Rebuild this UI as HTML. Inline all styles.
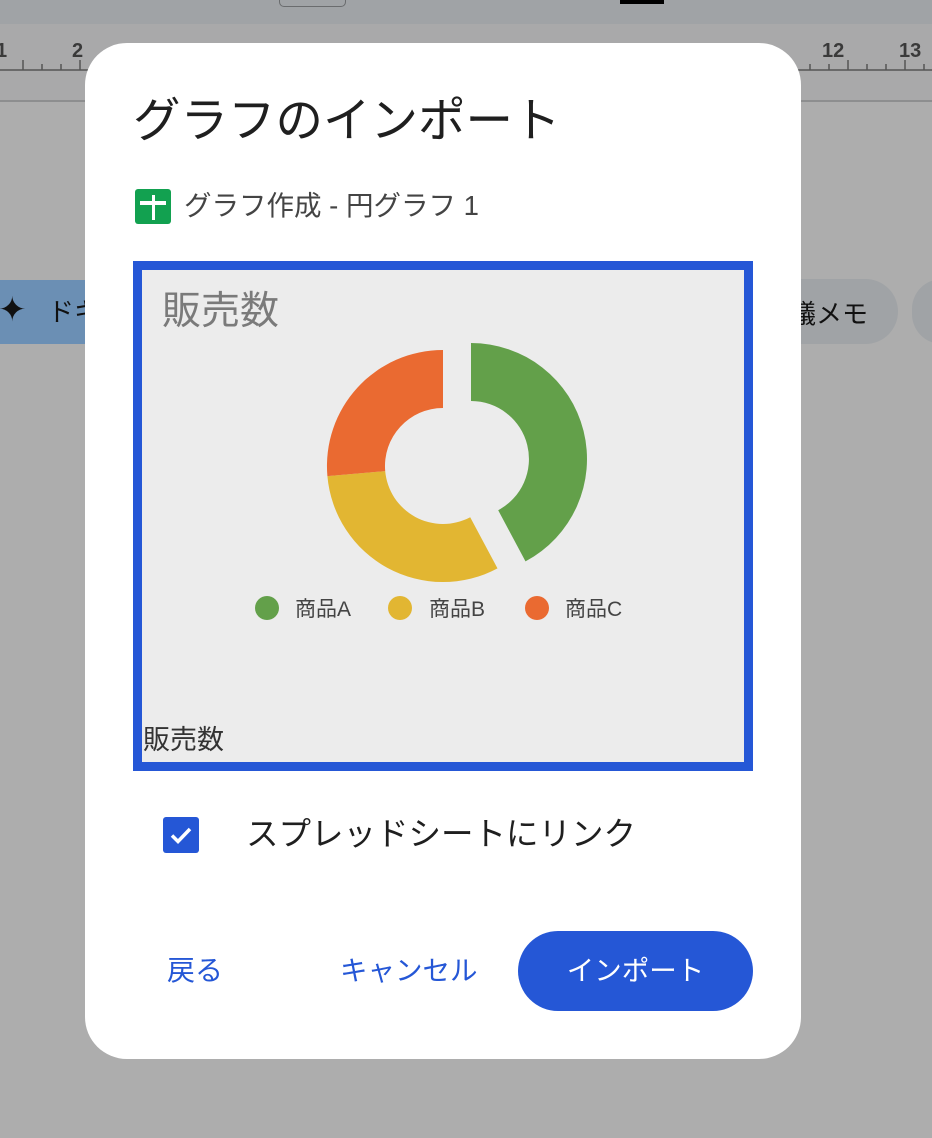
<!DOCTYPE html>
<html><head><meta charset="utf-8"><style>
*{margin:0;padding:0;box-sizing:border-box}
body{width:932px;height:1138px;overflow:hidden;background:#adadad;font-family:"Liberation Sans","Noto Sans CJK JP",sans-serif;position:relative}
.a{position:absolute;white-space:nowrap}
</style></head><body>
<div class="a" style="left:0;top:0;width:932px;height:24px;background:#a0a3a6"></div>
<div class="a" style="left:279px;top:-8px;width:67px;height:15px;border:1.5px solid #6a6c6e;border-radius:5px"></div>
<div class="a" style="left:620px;top:0;width:44px;height:4px;background:#000"></div>
<div class="a" style="left:0;top:24px;width:932px;height:78px;background:#a9a9aa;border-bottom:2px solid #8d8e8f"></div>
<svg class="a" style="left:0;top:24px" width="932" height="80">
<g fill="#3a3a3a" font-family="Liberation Sans" font-size="20" font-weight="bold">
<text x="-4" y="33">1</text><text x="72" y="33">2</text><text x="822" y="33">12</text><text x="899" y="33">13</text>
</g>
<g stroke="#555" stroke-width="1.5">
<path d="M23 36V46 M42 40V46 M61 40V46 M80 36V46 M99 40V46 M118 40V46 M137 36V46 M810 40V46 M829 40V46 M848 36V46 M867 40V46 M886 40V46 M905 36V46 M924 40V46"/>
<path d="M0 46H932"/>
</g>
</svg>
<div class="a" style="left:0;top:280px;width:100px;height:64px;background:#6b8fb4"></div>
<div class="a" style="left:-2px;top:290px;font-size:34px;color:#111">✦</div>
<div class="a" style="left:48px;top:292px;font-size:26px;color:#111">ドキ</div>
<div class="a" style="left:740px;top:279px;width:158px;height:65px;background:#a0a3a6;border-radius:33px"></div>
<div class="a" style="left:912px;top:279px;width:60px;height:65px;background:#a0a3a6;border-radius:33px"></div>
<div class="a" style="left:790px;top:294px;font-size:26px;color:#111">議メモ</div>

<div class="a" style="left:85px;top:43px;width:716px;height:1016px;background:#fff;border-radius:42px"></div>
<div class="a" style="left:133px;top:92px;font-size:47.5px;color:#1f1f1f;line-height:60px">グラフのインポート</div>
<div class="a" style="left:135px;top:189px;width:36px;height:35px;background:#12a150;border-radius:3px"></div>
<div class="a" style="left:140px;top:201px;width:26px;height:3.5px;background:#fff"></div>
<div class="a" style="left:151.5px;top:195px;width:3.5px;height:25px;background:#fff"></div>
<div class="a" style="left:184px;top:188px;font-size:27.5px;color:#444;line-height:36px">グラフ作成 - 円グラフ 1</div>

<div class="a" style="left:133px;top:261px;width:620px;height:510px;border:9px solid #2557d6;background:#ececec"></div>
<div class="a" style="left:162px;top:288px;font-size:39px;color:#7a7a7a;line-height:48px">販売数</div>
<svg class="a" style="left:0;top:0" width="932" height="700">
<path d="M471 343 A116 116 0 0 1 525.5 561.4 L498.2 510.2 A58 58 0 0 0 471 401 Z" fill="#63a04a"/>
<path d="M497.5 568.4 A116 116 0 0 1 327.4 476.1 L385.2 471.1 A58 58 0 0 0 470.2 517.2 Z" fill="#e2b632"/>
<path d="M327.4 476.1 A116 116 0 0 1 443 350 L443 408 A58 58 0 0 0 385.2 471.1 Z" fill="#ea6a31"/>
<circle cx="267" cy="608" r="12" fill="#63a04a"/>
<circle cx="400" cy="608" r="12" fill="#e2b632"/>
<circle cx="537" cy="608" r="12" fill="#ea6a31"/>
<g font-family="Liberation Sans, Noto Sans CJK JP, sans-serif" font-size="21" fill="#444">
<text x="295" y="616">商品A</text><text x="429" y="616">商品B</text><text x="565" y="616">商品C</text>
</g>
</svg>
<div class="a" style="left:143px;top:722px;font-size:27px;color:#333;line-height:36px">販売数</div>

<div class="a" style="left:163px;top:817px;width:36px;height:36px;background:#2557d6;border-radius:3px"></div>
<svg class="a" style="left:163px;top:817px" width="36" height="36"><path d="M9 18.5 L15 24.5 L27 12" stroke="#fff" stroke-width="3.5" fill="none"/></svg>
<div class="a" style="left:246px;top:813px;font-size:32.5px;color:#1f1f1f;line-height:42px">スプレッドシートにリンク</div>

<div class="a" style="left:167px;top:953px;font-size:28px;color:#2557d6;line-height:36px">戻る</div>
<div class="a" style="left:340px;top:953px;font-size:27.5px;color:#2557d6;line-height:36px">キャンセル</div>
<div class="a" style="left:518px;top:931px;width:235px;height:80px;background:#2557d6;border-radius:40px;color:#fff;font-size:27.5px;text-align:center;line-height:80px">インポート</div>
</body></html>
